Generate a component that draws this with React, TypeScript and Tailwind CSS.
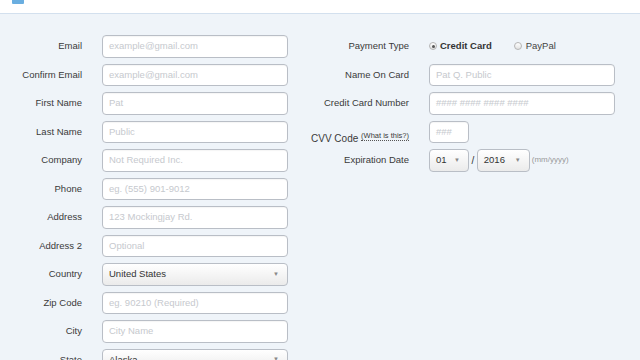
import React from 'react';

const font = { fontFamily: '"Liberation Sans", Arial, sans-serif' };

const leftRows: { label: string; placeholder?: string; select?: string }[] = [
  { label: 'Email', placeholder: 'example@gmail.com' },
  { label: 'Confirm Email', placeholder: 'example@gmail.com' },
  { label: 'First Name', placeholder: 'Pat' },
  { label: 'Last Name', placeholder: 'Public' },
  { label: 'Company', placeholder: 'Not Required Inc.' },
  { label: 'Phone', placeholder: 'eg. (555) 901-9012' },
  { label: 'Address', placeholder: '123 Mockingjay Rd.' },
  { label: 'Address 2', placeholder: 'Optional' },
  { label: 'Country', select: 'United States' },
  { label: 'Zip Code', placeholder: 'eg. 90210 (Required)' },
  { label: 'City', placeholder: 'City Name' },
  { label: 'State', select: 'Alaska' },
];

const Input: React.FC<{ placeholder: string; width: string }> = ({ placeholder, width }) => (
  <div
    className={`${width} h-[22.5px] shrink-0 flex items-center px-[6px] bg-white border border-[#b9bec6] rounded-[4px] shadow-[inset_0_1px_1px_rgba(0,0,0,0.04)] text-[9.5px] text-[#c6c9ce] whitespace-nowrap overflow-hidden`}
  >
    {placeholder}
  </div>
);

const Select: React.FC<{ value: string; width: string }> = ({ value, width }) => (
  <div
    className={`${width} h-[22.5px] shrink-0 flex items-center justify-between pl-[6px] pr-[8px] bg-gradient-to-b from-white to-[#ebebeb] border border-[#b9bec6] rounded-[4px] text-[9.5px] text-[#333]`}
  >
    <span>{value}</span>
    <span className="text-[6px] text-[#888]">▼</span>
  </div>
);

const Radio: React.FC<{ checked?: boolean }> = ({ checked }) => (
  <span className="w-[8px] h-[8px] rounded-full border border-[#b5b5b5] bg-gradient-to-b from-white to-[#e2e2e2] flex items-center justify-center">
    {checked && <span className="w-[3px] h-[3px] rounded-full bg-[#555]" />}
  </span>
);

export default function App() {
  return (
    <div className="w-[640px] h-[360px] overflow-hidden bg-[#eff4f9] text-[#333]" style={font}>
      <div className="h-[14px] bg-white border-b border-[#d3e0ee] pl-[12px]">
        <div className="w-[12px] h-[4px] bg-[#6aaee0] rounded-b-[1px]" />
      </div>

      <div className="flex pt-[21px]">
        {/* contact / address */}
        <div className="flex flex-col gap-[6px] w-[300px]">
          {leftRows.map((r) => (
            <div key={r.label} className="flex items-center gap-[20px]">
              <div className="w-[82px] text-right text-[9.5px] text-[#3a3a3a] whitespace-nowrap">{r.label}</div>
              {r.select ? (
                <Select value={r.select} width="w-[186px]" />
              ) : (
                <Input placeholder={r.placeholder!} width="w-[186px]" />
              )}
            </div>
          ))}
        </div>

        {/* payment */}
        <div className="flex flex-col gap-[6px]">
          <div className="flex items-center gap-[20px] h-[22.5px]">
            <div className="w-[109px] text-right text-[9.5px] text-[#3a3a3a]">Payment Type</div>
            <div className="flex items-center text-[9.5px]">
              <Radio checked />
              <span className="ml-[3px] font-bold text-[#333]">Credit Card</span>
              <span className="ml-[22px]"><Radio /></span>
              <span className="ml-[4px] text-[#444]">PayPal</span>
            </div>
          </div>
          <div className="flex items-center gap-[20px]">
            <div className="w-[109px] text-right text-[9.5px] text-[#3a3a3a]">Name On Card</div>
            <Input placeholder="Pat Q. Public" width="w-[186px]" />
          </div>
          <div className="flex items-center gap-[20px]">
            <div className="w-[109px] text-right text-[9.5px] text-[#3a3a3a]">Credit Card Number</div>
            <Input placeholder="#### #### #### ####" width="w-[186px]" />
          </div>
          <div className="flex items-center gap-[20px] h-[22.5px]">
            <div className="w-[109px] text-right text-[10px] text-[#3a3a3a] whitespace-nowrap translate-y-[7px]">
              CVV Code{' '}
              <span className="relative -top-[4px] text-[7.5px] border-b border-dotted border-[#555]">
                (What is this?)
              </span>
            </div>
            <Input placeholder="###" width="w-[40px]" />
          </div>
          <div className="flex items-center gap-[20px]">
            <div className="w-[109px] text-right text-[9.5px] text-[#3a3a3a]">Expiration Date</div>
            <div className="flex items-center">
              <Select value="01" width="w-[40px]" />
              <span className="mx-[2.5px] text-[10px]">/</span>
              <Select value="2016" width="w-[53px]" />
              <span className="ml-[2px] text-[8px] text-[#999]">(mm/yyyy)</span>
            </div>
          </div>
        </div>
      </div>
    </div>
  );
}
